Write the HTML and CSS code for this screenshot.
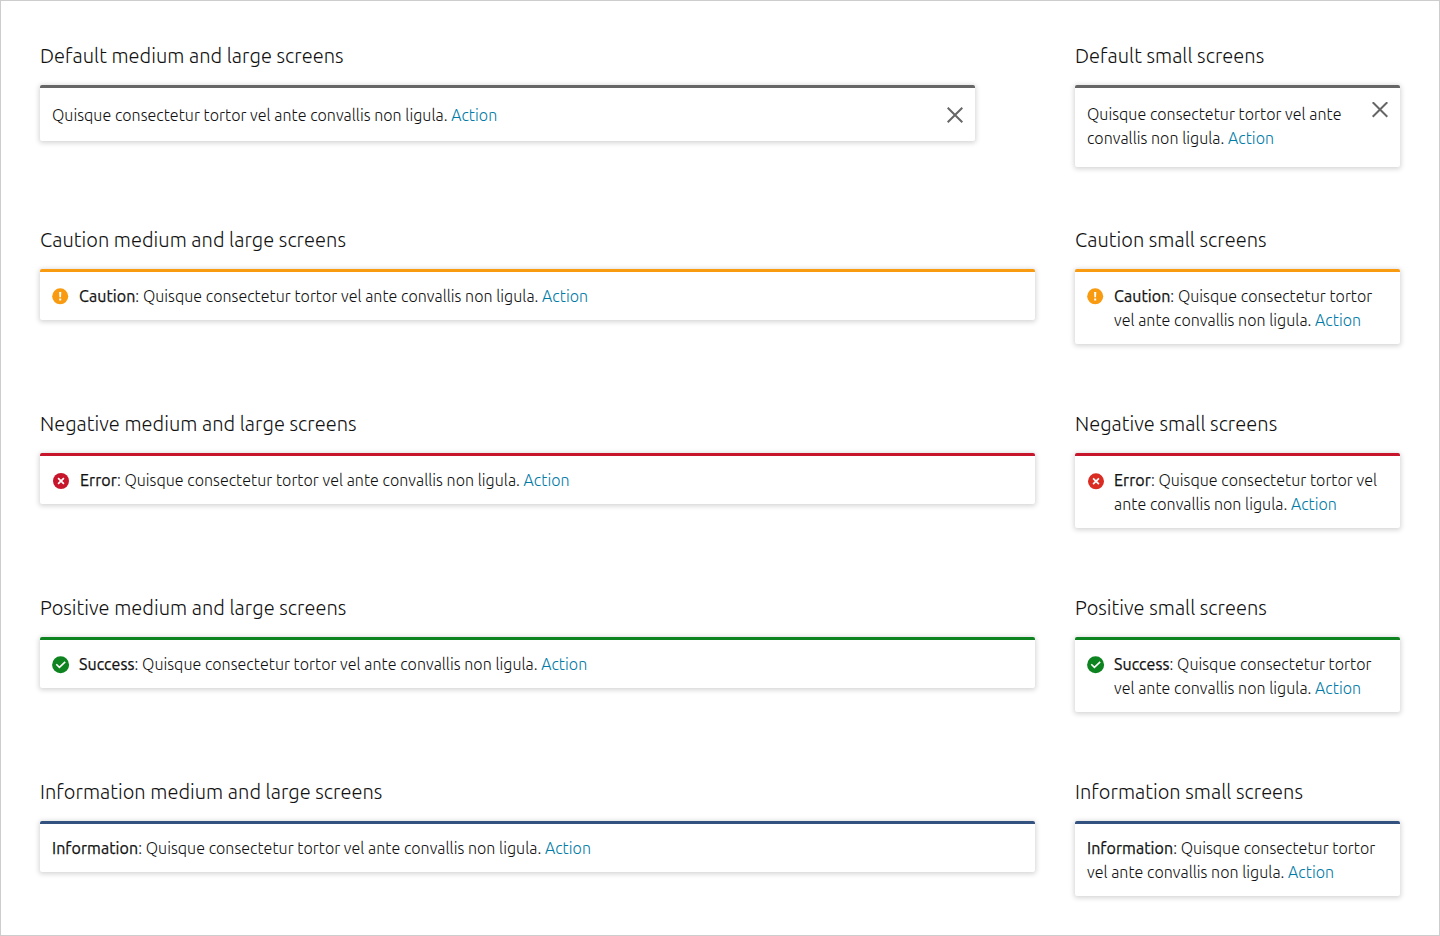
FILE: index.html
```
<!DOCTYPE html>
<html lang="en">
<head>
<meta charset="utf-8">
<title>Notifications</title>
<link rel="stylesheet" href="styles.css">
</head>
<body>
<main class="board">
  <section class="example">
    <h2 class="heading">Default medium and large screens</h2>
    <div class="note note-default note-wide">
      <p class="text">Quisque consectetur tortor vel ante convallis non ligula. <a class="action">Action</a></p>
      <svg class="close" viewBox="0 0 16 16"><path d="M.7.7l14.6 14.6M15.3.7L.7 15.3"/></svg>
    </div>
  </section>
  <section class="example">
    <h2 class="heading">Default small screens</h2>
    <div class="note note-default note-small">
      <p class="text">Quisque consectetur tortor vel ante<br>convallis non ligula. <a class="action">Action</a></p>
      <svg class="close" viewBox="0 0 16 16"><path d="M.7.2l14.6 14.6M15.3.2L.7 14.8"/></svg>
    </div>
  </section>

  <section class="example">
    <h2 class="heading">Caution medium and large screens</h2>
    <div class="note note-caution">
      <svg class="icon" viewBox="0 0 18 18"><circle cx="8.2" cy="8.3" r="8" fill="#f99b11"/><path d="M7.1 4h2.2l-.3 5.2h-1.6zM7.2 10.4h2v2h-2z" fill="#fff"/></svg>
      <p class="text"><strong class="label">Caution</strong>: Quisque consectetur tortor vel ante convallis non ligula. <a class="action">Action</a></p>
    </div>
  </section>
  <section class="example">
    <h2 class="heading">Caution small screens</h2>
    <div class="note note-caution">
      <svg class="icon" viewBox="0 0 18 18"><circle cx="8.2" cy="8.3" r="8" fill="#f99b11"/><path d="M7.1 4h2.2l-.3 5.2h-1.6zM7.2 10.4h2v2h-2z" fill="#fff"/></svg>
      <p class="text"><strong class="label">Caution</strong>: Quisque consectetur tortor<br>vel ante convallis non ligula. <a class="action">Action</a></p>
    </div>
  </section>

  <section class="example">
    <h2 class="heading">Negative medium and large screens</h2>
    <div class="note note-negative note-error-wide">
      <svg class="icon" viewBox="0 0 18 18"><circle cx="9" cy="9" r="8" fill="#c7162b"/><path d="M6.1 6.1l5.8 5.8M11.9 6.1l-5.8 5.8" stroke="#fff" stroke-width="1.7" fill="none"/></svg>
      <p class="text"><strong class="label">Error</strong>: Quisque consectetur tortor vel ante convallis non ligula. <a class="action">Action</a></p>
    </div>
  </section>
  <section class="example">
    <h2 class="heading">Negative small screens</h2>
    <div class="note note-negative">
      <svg class="icon" viewBox="0 0 18 18"><circle cx="9" cy="9.3" r="8" fill="#da2c23"/><path d="M6.1 6.4l5.8 5.8M11.9 6.4l-5.8 5.8" stroke="#fff" stroke-width="1.7" fill="none"/></svg>
      <p class="text"><strong class="label">Error</strong>: Quisque consectetur tortor vel<br>ante convallis non ligula. <a class="action">Action</a></p>
    </div>
  </section>

  <section class="example">
    <h2 class="heading">Positive medium and large screens</h2>
    <div class="note note-positive">
      <svg class="icon" viewBox="0 0 18 18"><circle cx="8.6" cy="8.7" r="8.5" fill="#0e8420"/><path d="M4.3 8.3l3.1 3.1 5.8-5.5" stroke="#fff" stroke-width="1.6" fill="none"/></svg>
      <p class="text"><strong class="label">Success</strong>: Quisque consectetur tortor vel ante convallis non ligula. <a class="action">Action</a></p>
    </div>
  </section>
  <section class="example">
    <h2 class="heading">Positive small screens</h2>
    <div class="note note-positive">
      <svg class="icon" viewBox="0 0 18 18"><circle cx="8.6" cy="8.7" r="8.5" fill="#0e8420"/><path d="M4.3 8.3l3.1 3.1 5.8-5.5" stroke="#fff" stroke-width="1.6" fill="none"/></svg>
      <p class="text"><strong class="label">Success</strong>: Quisque consectetur tortor<br>vel ante convallis non ligula. <a class="action">Action</a></p>
    </div>
  </section>

  <section class="example">
    <h2 class="heading">Information medium and large screens</h2>
    <div class="note note-info">
      <p class="text"><strong class="label">Information</strong>: Quisque consectetur tortor vel ante convallis non ligula. <a class="action">Action</a></p>
    </div>
  </section>
  <section class="example">
    <h2 class="heading">Information small screens</h2>
    <div class="note note-info">
      <p class="text"><strong class="label">Information</strong>: Quisque consectetur tortor<br>vel ante convallis non ligula. <a class="action">Action</a></p>
    </div>
  </section>
</main>
</body>
</html>
```
FILE: styles.css
```
* { box-sizing: border-box; }
body {
  margin: 0;
  background: #fff;
  color: #111;
  font-family: Ubuntu, "Noto Sans", sans-serif;
  font-weight: 300;
}
.board {
  display: grid;
  grid-template-columns: 995px 325px;
  grid-auto-rows: 184px;
  column-gap: 40px;
  height: 936px;
  padding: 39px 39px 0;
  border: 1px solid #cdcdcd;
  overflow: hidden;
}
.heading {
  margin: 0 0 13px;
  font-size: 20px;
  line-height: 32px;
  font-weight: 300;
  letter-spacing: .035px;
  white-space: nowrap;
}
.note {
  display: flex;
  align-items: flex-start;
  padding: 12px;
  border-top: 3px solid #666;
  border-radius: 2px;
  background: #fff;
  box-shadow: 0 1px 5px 1px rgba(0, 0, 0, .17);
}
.note-default { justify-content: space-between; }
.note-wide {
  width: 935px;
  height: 56px;
  padding-top: 15px;
}
.note-small {
  height: 82px;
  padding-top: 14px;
}
.note-caution { border-color: #f99b11; }
.note-negative { border-color: #c7162b; }
.note-positive { border-color: #0e8420; }
.note-info { border-color: #335280; }
.text {
  margin: 0;
  font-size: 16px;
  line-height: 24px;
  letter-spacing: .03px;
  white-space: nowrap;
}
.label {
  font-weight: 400;
  letter-spacing: .07px;
  -webkit-text-stroke: .25px #111;
}
.action { color: #007aa6; }
.icon {
  flex: none;
  width: 18px;
  height: 18px;
  margin: 4px 9px 0 0;
}
.note-error-wide .icon { margin-right: 10px; }
.close {
  flex: none;
  width: 16px;
  height: 16px;
  fill: none;
  stroke: #666;
  stroke-width: 2;
}
.note-wide .close { margin-top: 4px; }
```
